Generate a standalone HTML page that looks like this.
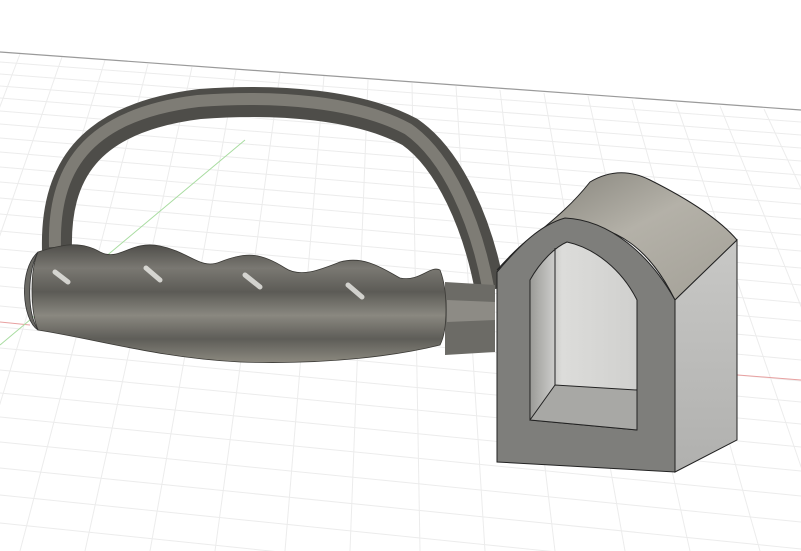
<!DOCTYPE html>
<html><head><style>html,body{margin:0;padding:0;background:#fff;width:801px;height:551px;overflow:hidden}svg{display:block}</style></head><body>
<svg width="801" height="551" viewBox="0 0 801 551" xmlns="http://www.w3.org/2000/svg">
<defs>
<linearGradient id="grip" x1="0" y1="0" x2="0" y2="1">
<stop offset="0" stop-color="#4f4e4a"/><stop offset="0.2" stop-color="#7a7872"/><stop offset="0.4" stop-color="#5c5b56"/><stop offset="0.6" stop-color="#8a8880"/><stop offset="0.8" stop-color="#5e5d58"/><stop offset="1" stop-color="#8c897f"/></linearGradient>
<linearGradient id="top" x1="0" y1="0" x2="1" y2="1">
<stop offset="0" stop-color="#7c7a72"/><stop offset="0.5" stop-color="#b4b1a8"/><stop offset="1" stop-color="#a3a097"/></linearGradient>
<linearGradient id="side" x1="0" y1="0" x2="0" y2="1">
<stop offset="0" stop-color="#c8c8c6"/><stop offset="1" stop-color="#b0b0ae"/></linearGradient>
<linearGradient id="hole" x1="0" y1="0" x2="1" y2="0">
<stop offset="0" stop-color="#9a9a97"/><stop offset="0.3" stop-color="#dcdcda"/><stop offset="1" stop-color="#d0d0ce"/></linearGradient>
</defs>
<g stroke="#ececec" stroke-width="1" fill="none">
<path d="M0 62 L801 122 M0 74 L801 135 M0 86 L801 148 M0 98 L801 161 M0 111 L801 175 M0 124 L801 189 M0 138 L801 204 M0 152 L801 219 M0 167 L801 235 M0 182 L801 251 M0 198 L801 268 M0 214 L801 285 M0 231 L801 303 M0 249 L801 321 M0 267 L801 340 M0 286 L801 360 M0 306 L801 381 M0 327 L801 402 M0 348 L801 424 M0 370 L801 447 M0 393 L801 471 M0 417 L801 496 M0 442 L801 522 M0 468 L801 549 M0 495 L801 577 M0 523 L801 606"/>
<path d="M20 54 L-170 551 M62 57 L-110 551 M105 60 L-45 551 M148 64 L20 551 M192 67 L85 551 M236 70 L150 551 M280 73 L215 551 M324 76 L285 551 M368 80 L350 551 M412 83 L420 551 M456 86 L485 551 M500 90 L555 551 M544 93 L625 551 M588 96 L690 551 M632 100 L760 551 M676 103 L830 551 M720 106 L900 551 M764 109 L970 551"/>
</g>
<path d="M0 52 L801 110" stroke="#9a9a9a" stroke-width="1.2"/>
<path d="M0 322 L30 325 M700 372 L801 380" stroke="#e8a0a0" stroke-width="1"/>
<path d="M245 140 L0 345" stroke="#a8dca0" stroke-width="1"/>
<path d="M57 250 C55 175 85 118 200 104 C280 98 360 105 410 132 C450 160 478 225 490 290" stroke="#4e4d49" stroke-width="30" fill="none"/>
<path d="M57 250 C55 175 85 118 200 104 C280 98 360 105 410 132 C450 160 478 225 490 290" stroke="#7e7c75" stroke-width="12" fill="none" transform="translate(-2,-3)"/>
<path d="M445 282 L495 285 L495 352 L445 355 Z" fill="#6c6b66"/>
<path d="M447 300 L495 302 L495 320 L447 322Z" fill="#8d8b85"/>
<path d="M38 252 C60 245 80 240 100 252 C120 262 130 240 160 246 C190 252 200 270 220 262 C245 252 260 252 285 268 C300 278 320 270 340 262 C365 255 385 270 400 278 C420 282 430 265 440 270 C448 290 448 330 440 345 C400 355 330 365 240 362 C160 358 100 340 38 330 C30 310 30 270 38 252Z" fill="url(#grip)" stroke="#3a3935" stroke-width="0.8"/>
<path d="M38 252 C28 270 26 310 38 330 C22 320 18 270 38 252Z" fill="#6a6964" stroke="#333" stroke-width="0.8"/>
<g stroke="#eeeeea" stroke-width="5" stroke-linecap="round" opacity="0.8">
<path d="M55 272 L68 282"/><path d="M146 268 L160 280"/><path d="M245 275 L260 287"/><path d="M348 285 L362 297"/>
</g>
<path d="M497 270 C530 235 560 220 590 182 C610 170 630 170 650 180 C690 200 720 220 737 240 L675 300 C650 250 620 225 560 220 C535 230 515 250 497 270Z" fill="url(#top)" stroke="#222" stroke-width="1"/>
<path d="M675 300 L737 240 L737 440 L675 472Z" fill="url(#side)" stroke="#222" stroke-width="1"/>
<path d="M497 272 C520 245 540 225 565 218 C610 220 650 255 675 300 L675 472 L497 462 Z" fill="#7e7e7b" stroke="#222" stroke-width="1"/>
<path d="M530 280 C540 262 555 247 567 242 C595 248 622 270 637 300 L637 430 L530 420 Z" fill="url(#hole)" stroke="#222" stroke-width="1"/>
<path d="M530 420 L555 385 L637 390 L637 430 Z" fill="#a8a8a5" stroke="#222" stroke-width="1"/>
<path d="M555 385 L555 248" stroke="#222" stroke-width="1"/>
</svg>
</body></html>
